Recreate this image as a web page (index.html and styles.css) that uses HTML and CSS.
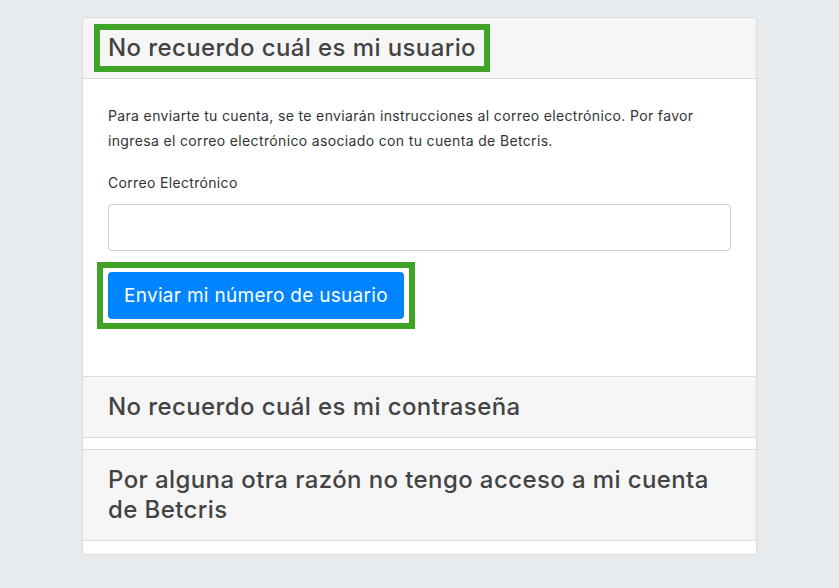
FILE: index.html
```html
<!DOCTYPE html>
<html lang="es">
<head>
<meta charset="utf-8">
<title>Recuperar cuenta</title>
<link rel="stylesheet" href="styles.css">
</head>
<body>
<div class="card">
  <section class="item open">
    <div class="item-header"><h2 class="item-title"><span class="mark">No recuerdo cuál es mi usuario</span></h2></div>
    <div class="item-body">
      <p class="intro">Para enviarte tu cuenta, se te enviarán instrucciones al correo electrónico. Por favor ingresa el correo electrónico asociado con tu cuenta de Betcris.</p>
      <label class="field-label" for="email">Correo Electrónico</label>
      <input class="field-input" id="email" type="email">
      <div class="btn-frame"><button class="btn-primary" type="button">Enviar mi número de usuario</button></div>
    </div>
  </section>
  <section class="item closed">
    <div class="item-header"><h2 class="item-title">No recuerdo cuál es mi contraseña</h2></div>
  </section>
  <section class="item closed">
    <div class="item-header"><h2 class="item-title">Por alguna otra razón no tengo acceso a mi cuenta de Betcris</h2></div>
  </section>
</div>
</body>
</html>
```
FILE: styles.css
```css
* { box-sizing: border-box; }
html, body { margin: 0; padding: 0; }
body {
  background: #e8ebee;
  font-family: Inter, Roboto, "Liberation Sans", Arial, sans-serif;
  color: #333;
  padding-top: 17px;
}
.card {
  width: 675px;
  margin: 0 auto;
  background: #fff;
  border: 1px solid #dcdcdc;
  border-radius: 4px;
}
.item-header {
  background: #f6f6f6;
  padding: 15px 25px;
  border-bottom: 1px solid #dcdcdc;
}
.item.open .item-header { border-top-left-radius: 4px; border-top-right-radius: 4px; }
.item.closed { margin-bottom: 11px; }
.item.closed .item-header { border-top: 1px solid #dcdcdc; }
.item.closed:last-child { margin-bottom: 13px; }
.item-title {
  margin: 0;
  font-size: 24px;
  line-height: 30px;
  font-weight: 500;
  letter-spacing: 0.4px;
  color: #434343;
}
.mark {
  display: inline-block;
  padding: 0 5px;
  margin-left: -5px;
  outline: 6px solid #3ea326;
  outline-offset: 3px;
}
.item-body {
  padding: 24px 25px 47px;
}
.intro {
  margin: 0 0 17px;
  font-size: 14px;
  line-height: 25px;
  letter-spacing: 0.35px;
  color: #333;
}
.field-label {
  display: block;
  font-size: 14px;
  line-height: 25px;
  letter-spacing: 0.33px;
  color: #333;
  margin-bottom: 9px;
}
.field-input {
  display: block;
  width: 100%;
  height: 47px;
  border: 1px solid #cfcfcf;
  border-radius: 4px;
  background: #fff;
  font: inherit;
  padding: 0 12px;
}
.btn-frame {
  width: fit-content;
  margin: 11px 0 0 -11px;
  padding: 4px 5px;
  border: 6px solid #3ea326;
}
.btn-primary {
  display: block;
  height: 47px;
  padding: 0 16px;
  background: #0084ff;
  color: #fff;
  border: none;
  border-radius: 4px;
  font-family: inherit;
  font-size: 19px;
  letter-spacing: 0.3px;
}
```
